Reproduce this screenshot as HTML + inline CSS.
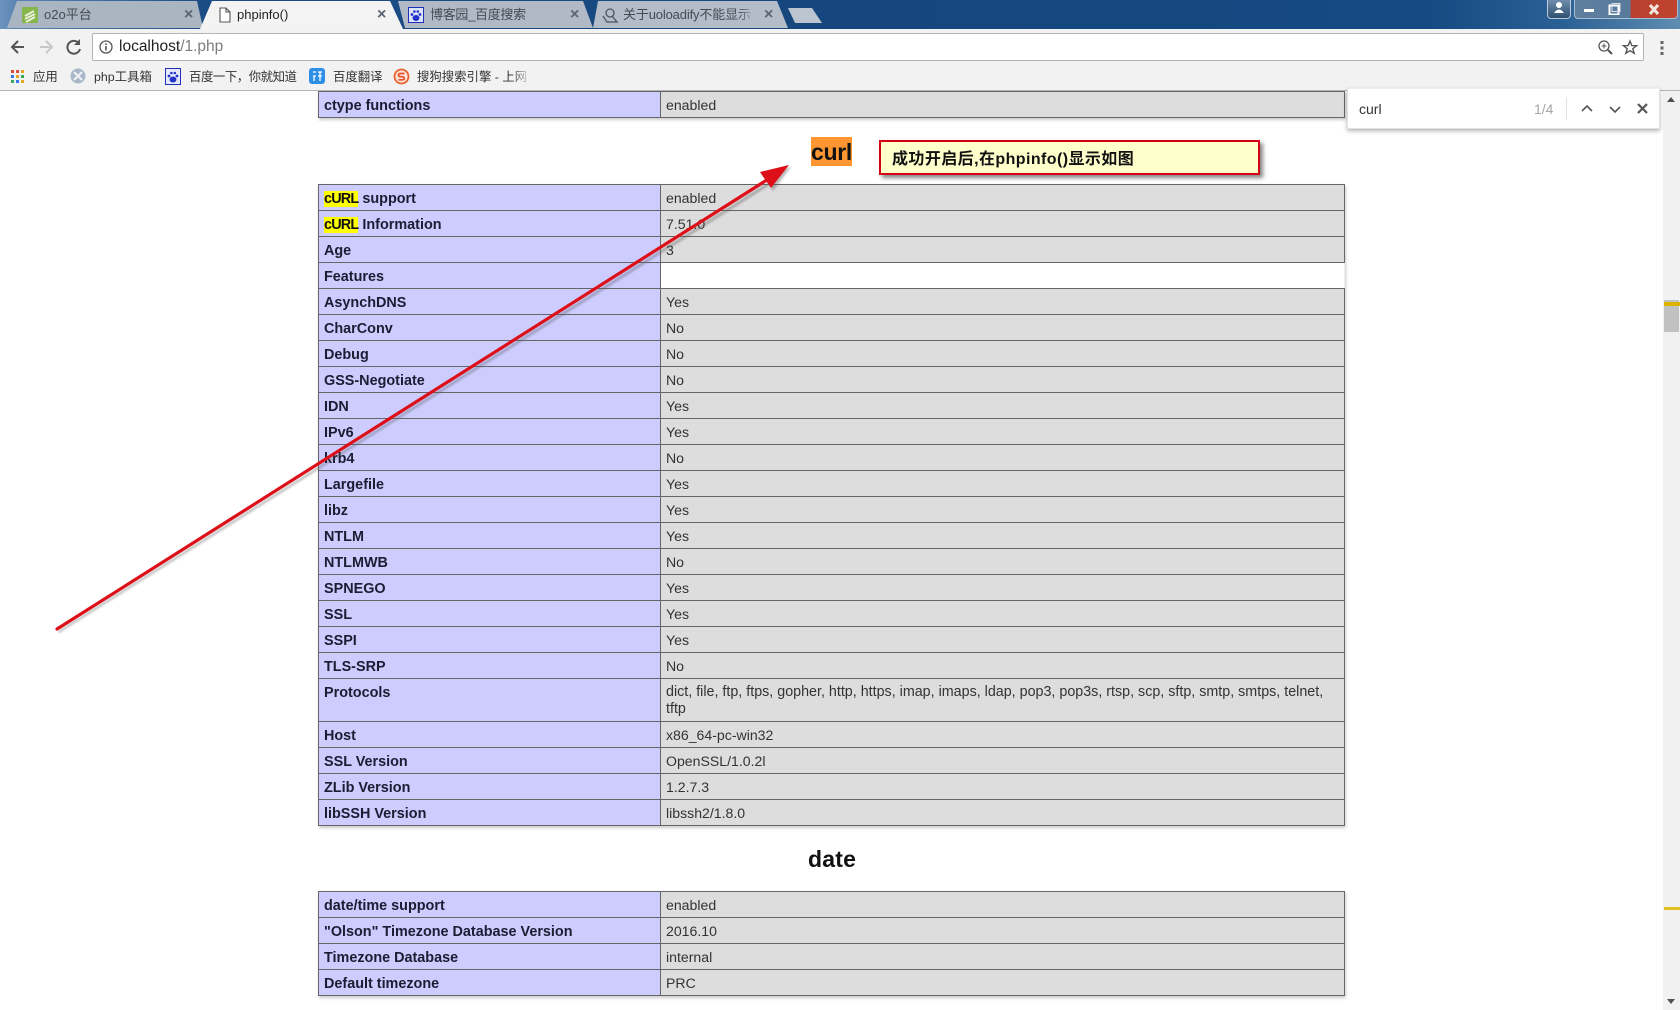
<!DOCTYPE html>
<html lang="zh"><head><meta charset="utf-8"><title>phpinfo()</title>
<style>
html,body{margin:0;padding:0;width:1680px;height:1010px;overflow:hidden;background:#fff}
body{position:relative;font-family:"Liberation Sans","Noto Sans CJK SC",sans-serif;color:#222}
.abs,svg.abs{position:absolute}
.t{position:absolute;white-space:nowrap;line-height:18px}
table{position:absolute;left:318px;width:1027px;border-collapse:collapse;table-layout:fixed;box-shadow:1px 2px 3px #ccc;font-size:14.4px;color:#222}
td{border:1px solid #666;padding:6px 5px 0;line-height:17px;vertical-align:top;box-sizing:border-box;height:26px}
td.e{width:342px;background:#ccf;font-weight:bold;color:#1c1c33}
td.v{background:#ddd;color:#333;overflow:hidden;font-size:14.1px;padding-left:5px;padding-top:5px}
td.w{background:#fff;border-right-color:#eee}
b.h{background:#ff0;font-weight:bold;color:#111;letter-spacing:-.8px}
h2{position:absolute;margin:0;font-size:23px;font-weight:bold;line-height:29px;color:#111}
.tab{font-size:13px;color:#454a53;top:6px}
.bm{font-size:12.4px;color:#333;top:68px}
.x{font-size:16px;color:#5a6470;top:6px;font-weight:bold}
</style></head><body>

<!-- title bar -->
<div class="abs" style="left:0;top:0;width:1680px;height:29px;background:linear-gradient(90deg,#6d93bf 0,#5a84b2 1%,#1b4d85 12%,#17467e 50%,#154a82 85%,#2a6094 93%,#5f8db1 100%)"></div>
<svg class="abs" style="left:0;top:0" width="1680" height="30">
<path d="M7 28 L17 1 L197 1 L203 28Z" fill="#aab5c2"/>
<path d="M398 1 L583 1 L593 28 L405 28Z" fill="#b1b9c6"/>
<path d="M598 1 L777 1 L788 28 L593 28Z" fill="#b4bcc9"/>
<path d="M788 8 L812 8 L822 23 L795 23Z" fill="#bcc4d0"/>
<path d="M200 29 L212 1 L390 1 L403 29Z" fill="#f3f3f3"/>
</svg>

<!-- tab icons -->
<svg class="abs" style="left:22px;top:7px" width="17" height="17"><rect width="16" height="16" fill="#86b54a"/><path d="M3 9 L12 4 M3 12 L13 7 M4 15 L13 10" stroke="#e8f2d8" stroke-width="2"/></svg>
<svg class="abs" style="left:218px;top:7px" width="14" height="16"><path d="M2 1 H8 L12 5 V15 H2Z M8 1 V5 H12" fill="#fff" stroke="#555" stroke-width="1.1"/></svg>
<svg class="abs" style="left:408px;top:7px" width="17" height="17"><rect x=".5" y=".5" width="15" height="15" fill="#dfe4fa" stroke="#1f2fb8"/><g fill="#2233c8"><ellipse cx="8" cy="11" rx="3.5" ry="3"/><circle cx="4" cy="7.5" r="1.4"/><circle cx="12" cy="7.5" r="1.4"/><circle cx="6.4" cy="4.5" r="1.3"/><circle cx="9.8" cy="4.5" r="1.3"/></g></svg>
<svg class="abs" style="left:602px;top:7px" width="17" height="17"><path d="M1 9 L5 15 H15 L10 9 M8 2 a4 4 0 1 1 0 8 a4 4 0 1 1 0-8" fill="none" stroke="#4a5360" stroke-width="1.3"/></svg>

<div class="t tab" style="left:44px">o2o平台</div>
<div class="t tab" style="left:237px;color:#222">phpinfo()</div>
<div class="t tab" style="left:430px;letter-spacing:-.3px">博客园_百度搜索</div>
<div class="t tab" style="left:623px;width:133px;overflow:hidden;letter-spacing:-.15px">关于uoloadify不能显示</div>
<div class="abs" style="left:738px;top:4px;width:18px;height:20px;background:linear-gradient(90deg,rgba(180,188,201,0),#b4bcc9)"></div>
<div class="t x" style="left:184px">×</div><div class="t x" style="left:377px">×</div><div class="t x" style="left:570px">×</div><div class="t x" style="left:764px">×</div>

<!-- window controls -->
<div class="abs" style="left:1547px;top:-1px;width:22px;height:18px;border:1px solid #b9cbdc;border-radius:0 0 4px 4px;background:linear-gradient(#6f8dab,#2f4f72)"></div>
<svg class="abs" style="left:1551px;top:1px" width="16" height="14"><circle cx="8" cy="4" r="3" fill="#fff"/><path d="M3 12 Q8 5 13 12Z" fill="#fff"/></svg>
<div class="abs" style="left:1574px;top:-1px;width:102px;height:18px;border:1px solid #a9bccf;border-radius:0 0 4px 4px;background:linear-gradient(90deg,#5f7f9f 0,#587a9b 54%,#b8402f 55%,#c0432f 100%)"></div>
<div class="abs" style="left:1584px;top:9px;width:10px;height:3px;background:#fff"></div>
<svg class="abs" style="left:1608px;top:3px" width="14" height="12"><rect x="1.5" y="2.5" width="9" height="9" fill="none" stroke="#fff" stroke-width="2"/><rect x="4" y="0.5" width="8" height="8" fill="none" stroke="#dde" stroke-width="1"/></svg>
<svg class="abs" style="left:1647px;top:4px" width="14" height="11"><path d="M3 1 L11 10 M11 1 L3 10" stroke="#f2e8e0" stroke-width="3"/></svg>

<!-- toolbar -->
<div class="abs" style="left:0;top:29px;width:1680px;height:61px;background:#f2f2f2;border-bottom:1px solid #b5b5b5"></div>
<div class="abs" style="left:92px;top:33px;width:1550px;height:26px;background:#fff;border:1px solid #b4b4b4;border-radius:2px"></div>
<svg class="abs" style="left:8px;top:36px" width="80" height="24" fill="none">
<path d="M16 11 H4 M10 5 L4 11 L10 17" stroke="#555" stroke-width="2"/>
<path d="M44 11 H32 M38 5 L44 11 L38 17" stroke="#c8c8c8" stroke-width="2"/>
<path d="M71 7.5 A6.4 6.4 0 1 0 72 13" stroke="#555" stroke-width="2"/><path d="M72 3 V9 H66Z" fill="#555"/>
</svg>
<svg class="abs" style="left:98px;top:39px" width="16" height="16"><circle cx="8" cy="8" r="6" fill="none" stroke="#555" stroke-width="1.3"/><rect x="7.2" y="7" width="1.6" height="4.5" fill="#555"/><rect x="7.2" y="4.3" width="1.6" height="1.7" fill="#555"/></svg>
<div class="t" style="left:119px;top:38px;font-size:15.5px;color:#222">localhost<span style="color:#7d7d7d">/1.php</span></div>
<svg class="abs" style="left:1596px;top:38px" width="80" height="20" fill="none">
<circle cx="8" cy="8" r="5" stroke="#555" stroke-width="1.3"/><path d="M12 12 L16 16" stroke="#555" stroke-width="2"/><path d="M5.5 8 H10.5 M8 5.5 V10.5" stroke="#555"/>
<path d="M34 3 L35.8 7.6 L40.5 7.7 L36.8 10.7 L38.2 15.3 L34 12.7 L29.8 15.3 L31.2 10.7 L27.5 7.7 L32.2 7.6Z" stroke="#555" stroke-width="1.4"/>
<g fill="#666"><rect x="64.5" y="3" width="3" height="3"/><rect x="64.5" y="8.5" width="3" height="3"/><rect x="64.5" y="14" width="3" height="3"/></g>
</svg>

<!-- bookmarks -->
<svg class="abs" style="left:11px;top:70px" width="14" height="14"><g><rect x="0" y="0" width="3" height="3" fill="#e04b3a"/><rect x="5" y="0" width="3" height="3" fill="#e04b3a"/><rect x="10" y="0" width="3" height="3" fill="#e8a320"/><rect x="0" y="5" width="3" height="3" fill="#3b78e7"/><rect x="5" y="5" width="3" height="3" fill="#e8a320"/><rect x="10" y="5" width="3" height="3" fill="#3ba55c"/><rect x="0" y="10" width="3" height="3" fill="#3ba55c"/><rect x="5" y="10" width="3" height="3" fill="#3b78e7"/><rect x="10" y="10" width="3" height="3" fill="#e8a320"/></g></svg>
<div class="t bm" style="left:33px">应用</div>
<svg class="abs" style="left:70px;top:68px" width="16" height="16"><circle cx="8" cy="8" r="7.5" fill="#a9b7c8"/><path d="M4 4 L12 12 M12 4 L4 12" stroke="#eef2f6" stroke-width="2"/></svg>
<div class="t bm" style="left:94px">php工具箱</div>
<svg class="abs" style="left:165px;top:68px" width="16" height="17"><rect x=".5" y=".5" width="15" height="16" fill="#e6e9fb" stroke="#1f2fb8"/><g fill="#2233c8"><ellipse cx="8" cy="11.5" rx="3.5" ry="3"/><circle cx="4" cy="8" r="1.4"/><circle cx="12" cy="8" r="1.4"/><circle cx="6.4" cy="5" r="1.3"/><circle cx="9.8" cy="5" r="1.3"/></g></svg>
<div class="t bm" style="left:189px;letter-spacing:-.45px">百度一下，你就知道</div>
<svg class="abs" style="left:309px;top:68px" width="16" height="17"><rect width="16" height="16" rx="3" fill="#2e8fe6"/><path d="M4 4 H7 M4 8 H7 M5 8 V13 M9 4 H13 M9 8 H13 M11 4 V13" stroke="#fff" stroke-width="1.3"/></svg>
<div class="t bm" style="left:333px">百度翻译</div>
<svg class="abs" style="left:393px;top:68px" width="17" height="17"><circle cx="8.5" cy="8.5" r="7" fill="#fbe6d8" stroke="#e8622f" stroke-width="1.8"/><path d="M11.5 5.5 H7 Q5.2 5.5 5.5 7.5 Q5.8 8.8 8.5 8.7 Q11.3 8.8 11.3 10.3 Q11.3 11.8 9.5 11.8 H5.5" fill="none" stroke="#e8522f" stroke-width="1.7"/></svg>
<div class="t bm" style="left:417px;width:113px;overflow:hidden">搜狗搜索引擎 - 上网</div>
<div class="abs" style="left:510px;top:66px;width:22px;height:22px;background:linear-gradient(90deg,rgba(242,242,242,0),#f2f2f2)"></div>

<!-- page -->
<div class="abs" style="left:0;top:91px;width:1663px;height:919px;overflow:hidden;background:#fff">
<table style="top:0;left:318px">
<tr><td class="e">ctype functions</td><td class="v">enabled</td></tr>
</table>
<table style="top:93px">
<tr><td class="e"><b class="h">cURL</b> support</td><td class="v">enabled</td></tr>
<tr><td class="e"><b class="h">cURL</b> Information</td><td class="v">7.51.0</td></tr>
<tr><td class="e">Age</td><td class="v">3</td></tr>
<tr><td class="e">Features</td><td class="w"></td></tr>
<tr><td class="e">AsynchDNS</td><td class="v">Yes</td></tr>
<tr><td class="e">CharConv</td><td class="v">No</td></tr>
<tr><td class="e">Debug</td><td class="v">No</td></tr>
<tr><td class="e">GSS-Negotiate</td><td class="v">No</td></tr>
<tr><td class="e">IDN</td><td class="v">Yes</td></tr>
<tr><td class="e">IPv6</td><td class="v">Yes</td></tr>
<tr><td class="e">krb4</td><td class="v">No</td></tr>
<tr><td class="e">Largefile</td><td class="v">Yes</td></tr>
<tr><td class="e">libz</td><td class="v">Yes</td></tr>
<tr><td class="e">NTLM</td><td class="v">Yes</td></tr>
<tr><td class="e">NTLMWB</td><td class="v">No</td></tr>
<tr><td class="e">SPNEGO</td><td class="v">Yes</td></tr>
<tr><td class="e">SSL</td><td class="v">Yes</td></tr>
<tr><td class="e">SSPI</td><td class="v">Yes</td></tr>
<tr><td class="e">TLS-SRP</td><td class="v">No</td></tr>
<tr><td class="e" style="height:43px">Protocols</td><td class="v" style="height:43px;font-size:14.3px">dict, file, ftp, ftps, gopher, http, https, imap, imaps, ldap, pop3, pop3s, rtsp, scp, sftp, smtp, smtps, telnet,<br>tftp</td></tr>
<tr><td class="e">Host</td><td class="v">x86_64-pc-win32</td></tr>
<tr><td class="e">SSL Version</td><td class="v">OpenSSL/1.0.2l</td></tr>
<tr><td class="e">ZLib Version</td><td class="v">1.2.7.3</td></tr>
<tr><td class="e">libSSH Version</td><td class="v">libssh2/1.8.0</td></tr>
</table>
<h2 style="left:811px;top:46px;height:29px;line-height:30px;background:#ff9632;padding:0;letter-spacing:-.3px">curl</h2>
<h2 style="left:808px;top:754px;letter-spacing:.2px">date</h2>
<table style="top:800px">
<tr><td class="e">date/time support</td><td class="v">enabled</td></tr>
<tr><td class="e">"Olson" Timezone Database Version</td><td class="v">2016.10</td></tr>
<tr><td class="e">Timezone Database</td><td class="v">internal</td></tr>
<tr><td class="e">Default timezone</td><td class="v">PRC</td></tr>
</table>
</div>

<!-- scrollbar -->
<div class="abs" style="left:1663px;top:91px;width:17px;height:919px;background:#f1f1f1"></div>
<div class="abs" style="left:1664px;top:300px;width:15px;height:32px;background:#c1c1c1"></div>
<div class="abs" style="left:1664px;top:302px;width:16px;height:4px;background:#dcb400"></div>
<div class="abs" style="left:1664px;top:907px;width:16px;height:3px;background:#e2c020"></div>
<svg class="abs" style="left:1666px;top:96px" width="10" height="8"><path d="M5 1 L9 6 H1Z" fill="#505050"/></svg>
<svg class="abs" style="left:1666px;top:997px" width="10" height="8"><path d="M5 7 L9 2 H1Z" fill="#505050"/></svg>

<!-- find bar -->
<div class="abs" style="left:1347px;top:88px;width:313px;height:41px;background:#fff;border:1px solid #e2e2e2;border-top-color:#eee;box-sizing:border-box;box-shadow:0 2px 4px rgba(0,0,0,.3)"></div>
<div class="t" style="left:1359px;top:100px;font-size:14px;color:#333">curl</div>
<div class="t" style="left:1534px;top:100px;font-size:14px;color:#a5a5a5">1/4</div>
<div class="abs" style="left:1566px;top:97px;width:1px;height:23px;background:#e2e2e2"></div>
<svg class="abs" style="left:1580px;top:102px" width="72" height="14" fill="none" stroke="#555" stroke-width="1.6"><path d="M2 9 L7 4 L12 9"/><path d="M30 5 L35 10 L40 5"/><path d="M58 2 L67 11 M67 2 L58 11" stroke-width="2.2"/></svg>

<!-- annotation -->
<div class="abs" style="left:879px;top:140px;width:381px;height:35px;box-sizing:border-box;background:#ffc;border:2px solid #d40018;box-shadow:3px 3px 4px rgba(70,70,70,.65)"></div>
<div class="t" style="left:892px;top:149.5px;font-size:16px;font-weight:bold;color:#111;line-height:20px;letter-spacing:.42px;font-family:'Liberation Sans','Noto Sans CJK SC',sans-serif">成功开启后,在phpinfo()显示如图</div>

<!-- arrow -->
<svg class="abs" style="left:0;top:0" width="1680" height="1010">
<g style="filter:blur(1px)" opacity=".4" fill="#555"><path d="M58 631 L772 180 L773 183 L59 633Z"/><path d="M791 167 L763 175 L773 191Z"/></g>
<g style="filter:blur(.3px)">
<path d="M57 629 L770 178" stroke="#dd1019" stroke-width="3.2" stroke-linecap="round" fill="none"/>
<path d="M789 165 L760 172 L771 188Z" fill="#dd1019"/>
</g>
</svg>
</body></html>
